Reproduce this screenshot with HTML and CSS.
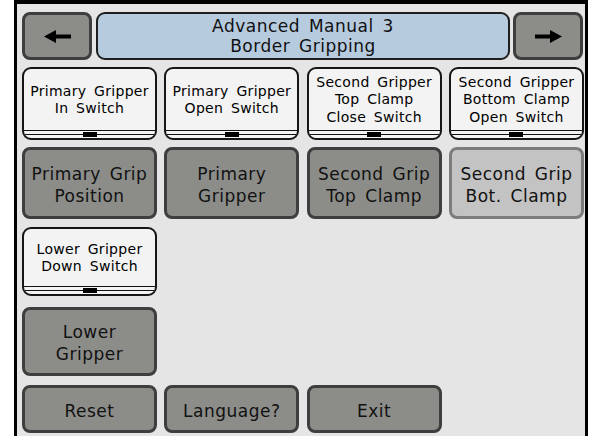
FILE: index.html
```html
<!DOCTYPE html>
<html>
<head>
<meta charset="utf-8">
<link rel="stylesheet" href="styles.css">
</head>
<body>
<div class="frame">
  <div class="header">
    <div class="btn arrow">
      <svg width="27" height="13" viewBox="0 0 27 13"><polygon points="0,6.5 12,0 12,4.5 27,4.5 27,8.5 12,8.5 12,13" fill="#000"/></svg>
    </div>
    <div class="title"><span class="tl">Advanced Manual 3</span><span class="tl">Border Gripping</span></div>
    <div class="btn arrow">
      <svg width="27" height="13" viewBox="0 0 27 13"><polygon points="27,6.5 15,0 15,4.5 0,4.5 0,8.5 15,8.5 15,13" fill="#000"/></svg>
    </div>
  </div>

  <div class="row r1">
    <div class="switch"><div class="label">Primary Gripper<br>In Switch</div><div class="base"><span class="knob"></span></div></div>
    <div class="switch"><div class="label">Primary Gripper<br>Open Switch</div><div class="base"><span class="knob"></span></div></div>
    <div class="switch"><div class="label">Second Gripper<br>Top Clamp<br>Close Switch</div><div class="base"><span class="knob"></span></div></div>
    <div class="switch"><div class="label">Second Gripper<br>Bottom Clamp<br>Open Switch</div><div class="base"><span class="knob"></span></div></div>
  </div>

  <div class="row r2">
    <div class="btn">Primary Grip<br>Position</div>
    <div class="btn">Primary<br>Gripper</div>
    <div class="btn">Second Grip<br>Top Clamp</div>
    <div class="btn light">Second Grip<br>Bot. Clamp</div>
  </div>

  <div class="row r3">
    <div class="switch"><div class="label">Lower Gripper<br>Down Switch</div><div class="base"><span class="knob"></span></div></div>
  </div>

  <div class="row r4">
    <div class="btn">Lower<br>Gripper</div>
  </div>

  <div class="row r5">
    <div class="btn">Reset</div>
    <div class="btn">Language?</div>
    <div class="btn">Exit</div>
  </div>
</div>
</body>
</html>
```

FILE: styles.css
```css
html, body {
  margin: 0;
  padding: 0;
  background: #ffffff;
}

body {
  font-family: "DejaVu Sans", sans-serif;
  color: #111;
}

.frame {
  margin-left: 14px;
  width: 574px;
  min-height: 440px;
  box-sizing: border-box;
  border-left: 3px solid #000;
  border-right: 3px solid #000;
  border-top: 4px solid #000;
  background: #e5e5e5;
  padding: 8px 1px 0 5px;
}

.header {
  display: flex;
  height: 48px;
  width: 561px;
}

.btn {
  box-sizing: border-box;
  border: 3px solid #3e3e3e;
  border-radius: 8px;
  background: #8c8d89;
  display: flex;
  align-items: center;
  justify-content: center;
  text-align: center;
  font-size: 17px;
  line-height: 22px;
  letter-spacing: 0.5px;
  word-spacing: 3px;
  padding-top: 3px;
}

.btn.light {
  background: #c3c3c3;
  border-color: #7c7c7c;
}

.arrow {
  width: 70px;
  flex: none;
  padding-top: 0;
}

.title {
  flex: 1;
  margin: 0 3px 0 4px;
  box-sizing: border-box;
  border: 2px solid #1e1e1e;
  border-radius: 9px;
  background: #b7cbdf;
  display: flex;
  flex-direction: column;
  align-items: center;
  justify-content: center;
  text-align: center;
  font-size: 17px;
  line-height: 20px;
  letter-spacing: 0.5px;
  word-spacing: 3px;
}

.title .tl {
  display: block;
  height: 20px;
}

.row {
  display: grid;
  grid-template-columns: repeat(4, 135px);
  column-gap: 7.33px;
}

.r1 { margin-top: 7px; height: 73px; }
.r2 { margin-top: 7px; height: 72px; }
.r3 { margin-top: 8px; height: 69px; }
.r4 { margin-top: 11px; height: 69px; }
.r5 { margin-top: 9px; height: 48px; }

.switch {
  box-sizing: border-box;
  border: 2px solid #161616;
  border-radius: 9px;
  background: #f3f3f3;
  display: flex;
  flex-direction: column;
  overflow: hidden;
}

.switch .label {
  flex: 1;
  display: flex;
  align-items: center;
  justify-content: center;
  text-align: center;
  font-size: 14px;
  line-height: 17.5px;
  letter-spacing: 0.3px;
  word-spacing: 3px;
  padding-top: 1px;
  color: #000;
}

.switch .base {
  height: 6px;
  border-top: 1px solid #111;
  margin-bottom: 1px;
  display: flex;
  justify-content: center;
  align-items: flex-end;
  background: linear-gradient(#111, #111) 0 3px / 100% 1px no-repeat;
}

.switch .knob {
  width: 14px;
  height: 5px;
  background: #000;
}
```
